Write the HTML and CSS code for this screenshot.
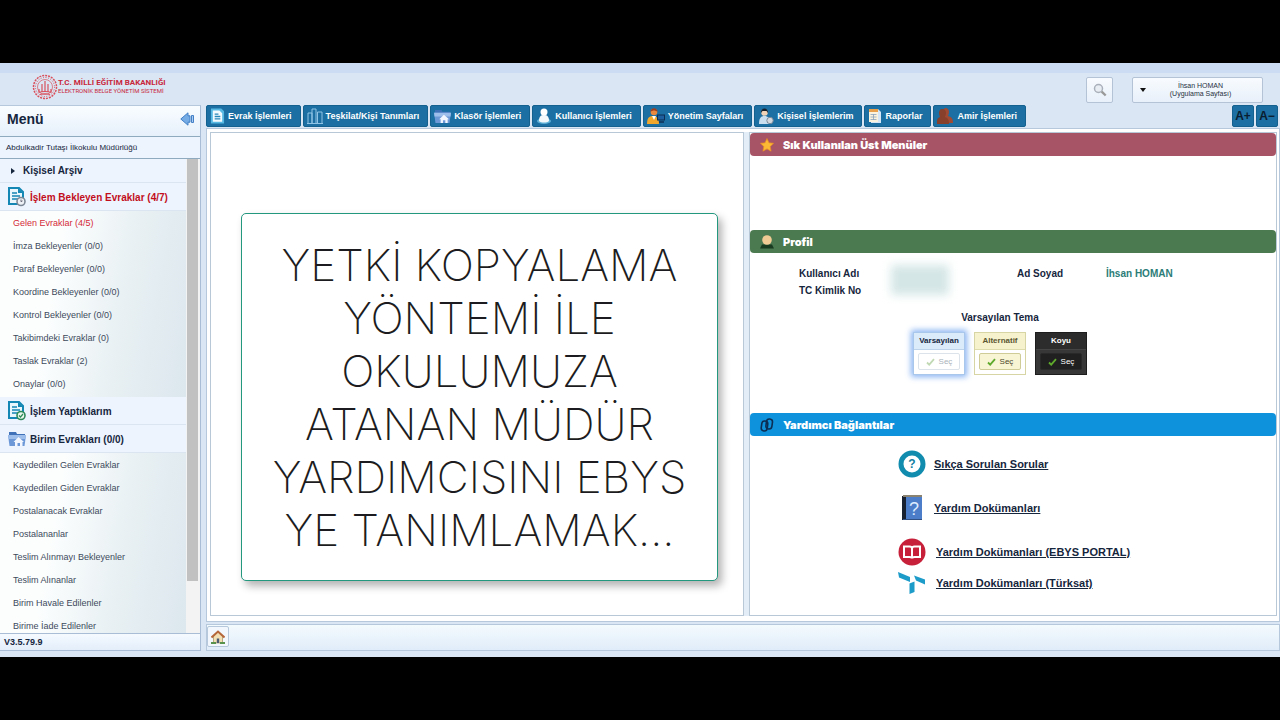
FILE: index.html
```
<!DOCTYPE html>
<html lang="tr">
<head>
    <meta charset="UTF-8">
    <meta name="viewport" content="width=device-width, initial-scale=1.0">
    <title>Elektronik Belge Yönetim Sistemi</title>
    <link rel="stylesheet" href="styles.css">
</head>
<body>
    <!-- shared icons -->
    <svg class="sprite" aria-hidden="true">
        <symbol id="doc" viewBox="0 0 16 18">
            <path d="M1 1h10l4 4v12H1z" fill="#e9f7fc" stroke="#1487b4" stroke-width="2"/>
            <path d="M10 1v5h5" fill="#1487b4"/>
            <path d="M4 6h5M4 9h8M4 12h8" stroke="#1487b4" stroke-width="1.6"/>
        </symbol>
        <symbol id="doc-light" viewBox="0 0 16 16">
            <path d="M1 0h11l3 3v13H1z" fill="#56b9e4"/>
            <path d="M3 2h7l3 3v9H3z" fill="#f4fbff"/>
            <path d="M5 6h4M5 8.500h6M5 11h6" stroke="#2586b8" stroke-width="1.4"/>
        </symbol>
        <symbol id="folder" viewBox="0 0 18 16">
            <path d="M1 1h7l1 2h8v7H1z" fill="#3f71b8"/>
            <path d="M0 4h18l-1.500 11h-15z" fill="#6c98d8"/>
            <path d="M0 4h18l-.5 4H.5z" fill="#9dbdea"/>
            <path d="M10.500 6l5.500 5h-1.500v4h-2.500v-3h-2.500v3H7v-4H5.500z" fill="#f2f7ff"/>
        </symbol>
        <symbol id="check" viewBox="0 0 9 8">
            <path d="M1 4.500l2.200 2.200L8 1.200" fill="none" stroke="currentColor" stroke-width="1.800"/>
        </symbol>
    </svg>

    <div class="app">
        <header class="top">
            <div class="logo">
                <svg class="emblem" viewBox="0 0 26 26" fill="none" stroke="#d9505c">
                    <circle cx="13" cy="13" r="11.500" stroke-width="1.500" stroke-dasharray="2 1"/>
                    <circle cx="13" cy="13" r="9.500" stroke-width="1" stroke-dasharray="1 1.500"/>
                    <circle cx="13" cy="13" r="7.500" stroke-width=".7"/>
                    <path d="M13 7v11M10 10v8M16 10v8M7 15v3M19 15v3" stroke-width="1.200"/>
                    <path d="M6.500 18.500q6.500-2 13 0M8 20.500q5-1.500 10 0" stroke-width="1.200"/>
                </svg>
                <div>
                    <strong>T.C. MİLLİ EĞİTİM BAKANLIĞI</strong>
                    <span>ELEKTRONİK BELGE YÖNETİM SİSTEMİ</span>
                </div>
            </div>
            <div class="tools">
                <button class="search" aria-label="Ara">
                    <svg width="14" height="14" viewBox="0 0 14 14" fill="none"><circle cx="5.500" cy="5.500" r="4" fill="#e8edf4" stroke="#aab0ba" stroke-width="1.500"/><path d="M8.700 8.700l4 3.800" stroke="#999" stroke-width="2.400"/></svg>
                </button>
                <button class="user" aria-haspopup="true">
                    <i class="caret"></i>
                    <span>İhsan HOMAN<br>(Uygulama Sayfası)</span>
                </button>
            </div>
        </header>

        <div class="layout">
            <aside class="sidebar">
                <div class="side-head">
                    <h1>Menü</h1>
                    <button class="collapse" aria-label="Menüyü gizle">
                        <svg width="15" height="14" viewBox="0 0 15 14" fill="#75ace6" stroke="#4380c6"><path d="M.8 7L8 .8v3h2v6.400H8v3z"/><path d="M11.500 3.500h2v7h-2z" fill="#a9cdf2"/></svg>
                    </button>
                </div>
                <p class="school">Abdulkadir Tutaşı İlkokulu Müdürlüğü</p>
                <div class="side-scroll">
                    <nav class="tree">
                        <a class="group small" href="#"><i class="arrow"></i>Kişisel Arşiv</a>
                        <a class="group waiting" href="#">
                            <svg width="18" height="20" viewBox="0 0 18 20"><use href="#doc" width="16" height="18"/><circle cx="13" cy="14.500" r="4" fill="#eef1f5" stroke="#7d8896" stroke-width="1.600"/><path d="M13 12.500v2.200l1.500-.8" fill="none" stroke="#667"/></svg>
                            İşlem Bekleyen Evraklar (4/7)
                        </a>
                        <ul>
                            <li><a class="red" href="#">Gelen Evraklar (4/5)</a></li>
                            <li><a href="#">İmza Bekleyenler (0/0)</a></li>
                            <li><a href="#">Paraf Bekleyenler (0/0)</a></li>
                            <li><a href="#">Koordine Bekleyenler (0/0)</a></li>
                            <li><a href="#">Kontrol Bekleyenler (0/0)</a></li>
                            <li><a href="#">Takibimdeki Evraklar (0)</a></li>
                            <li><a href="#">Taslak Evraklar (2)</a></li>
                            <li><a href="#">Onaylar (0/0)</a></li>
                        </ul>
                        <a class="group" href="#">
                            <svg width="18" height="20" viewBox="0 0 18 20"><use href="#doc" width="16" height="18"/><circle cx="13" cy="14.500" r="4" fill="#e9f7ec" stroke="#2d8a59" stroke-width="1.600"/><path d="M11 14.500l1.500 1.500 2.500-3" fill="none" stroke="#2d8a59" stroke-width="1.200"/></svg>
                            İşlem Yaptıklarım
                        </a>
                        <a class="group" href="#">
                            <svg width="18" height="16"><use href="#folder" width="18" height="16"/></svg>
                            Birim Evrakları (0/0)
                        </a>
                        <ul>
                            <li><a href="#">Kaydedilen Gelen Evraklar</a></li>
                            <li><a href="#">Kaydedilen Giden Evraklar</a></li>
                            <li><a href="#">Postalanacak Evraklar</a></li>
                            <li><a href="#">Postalananlar</a></li>
                            <li><a href="#">Teslim Alınmayı Bekleyenler</a></li>
                            <li><a href="#">Teslim Alınanlar</a></li>
                            <li><a href="#">Birim Havale Edilenler</a></li>
                            <li><a href="#">Birime İade Edilenler</a></li>
                        </ul>
                    </nav>
                    <div class="track"><div class="thumb"></div></div>
                </div>
                <p class="version">V3.5.79.9</p>
            </aside>

            <main class="main">
                <div class="menubar">
                    <button>
                        <svg width="15" height="16"><use href="#doc-light" width="15" height="16"/></svg>
                        Evrak İşlemleri
                    </button>
                    <button>
                        <svg width="16" height="16" viewBox="0 0 16 16" fill="none" stroke="#8fc4e6"><path d="M1 15V5h4v10M5 15V1h4v14M10.500 15V4H15v11M0 15.500h16"/></svg>
                        Teşkilat/Kişi Tanımları
                    </button>
                    <button>
                        <svg width="17" height="15"><use href="#folder" width="17" height="15"/></svg>
                        Klasör İşlemleri
                    </button>
                    <button>
                        <svg width="16" height="16" viewBox="0 0 16 16"><ellipse cx="8" cy="13" rx="7" ry="3" fill="#5db1d8"/><circle cx="8" cy="4" r="3.500" fill="#fff"/><path d="M3 13c0-5 2-6 5-6s5 1 5 6c-2 2-8 2-10 0z" fill="#f3f8fb"/></svg>
                        Kullanıcı İşlemleri
                    </button>
                    <button>
                        <svg width="18" height="16" viewBox="0 0 18 16"><circle cx="7" cy="4" r="3.300" fill="#e9893f"/><path d="M3.500 4c0-5 7-5 7 0-2-2-5-2-7 0z" fill="#9d3d1d"/><path d="M0 16c0-6 2-8 6-8s6 3 6 8z" fill="#f0a72c"/><path d="M5 8l2 4 2-4z" fill="#fff"/><rect x="10.500" y="7" width="7" height="5" fill="#1d5f9f" stroke="#0e2e55"/><path d="M12 14h5" stroke="#0e2e55" stroke-width="1.500"/></svg>
                        Yönetim Sayfaları
                    </button>
                    <button>
                        <svg width="16" height="16" viewBox="0 0 16 16"><circle cx="6.500" cy="4.500" r="3.300" fill="#f1d3b8"/><path d="M3 5c-.5-6 7.500-6 7 0L8.500 3h-4z" fill="#16202c"/><path d="M1 16c0-6 2-8 5.500-8S12 10 12 16z" fill="#c9dff0"/><circle cx="12" cy="12.500" r="3.200" fill="#d3d8de" stroke="#78889a"/></svg>
                        Kişisel İşlemlerim
                    </button>
                    <button>
                        <svg width="14" height="16" viewBox="0 0 14 16"><path d="M3 1h7l3 3v11H3z" fill="#d5e7f6"/><path d="M1 2h9v12H1z" fill="#fbf3de"/><path d="M1 1h9v3H1z" fill="#e9a04a"/><path d="M2.500 6.500h6M2.500 9h6M2.500 11.500h6M5.500 6v6" stroke="#8ba3bd" stroke-width=".8"/></svg>
                        Raporlar
                    </button>
                    <button>
                        <svg width="17" height="16" viewBox="0 0 17 16"><path d="M8 0c3 0 4 2 4 4s-1 3-1 4c4 1 5 3 5 7H6V2z" fill="#a14a33"/><path d="M5 1c3 0 4 2 4 4S8 8 8 9c3 1 4 3 4 7H0c0-4 0-6 3-7 0-1-1-2-1-4s1-4 3-4z" fill="#86402c"/></svg>
                        Amir İşlemleri
                    </button>
                    <div class="zoomers">
                        <button>A+</button>
                        <button>A−</button>
                    </div>
                </div>

                <div class="content">
                    <section class="pane left">
                        <div class="notice">YETKİ KOPYALAMA<br>YÖNTEMİ İLE<br>OKULUMUZA<br>ATANAN MÜDÜR<br>YARDIMCISINI EBYS<br>YE TANIMLAMAK...</div>
                    </section>
                    <section class="pane right">
                        <h2 class="bar rose">
                            <svg width="14" height="14" viewBox="0 0 14 14"><path d="M7 .5l2 4.300 4.600.5-3.400 3.200.9 4.700L7 10.900l-4.100 2.300.9-4.700L.4 5.300 5 4.800z" fill="#fbb934" stroke="#e88a22" stroke-width=".7"/></svg>
                            Sık Kullanılan Üst Menüler
                        </h2>
                        <div class="favorites"></div>

                        <h2 class="bar green">
                            <svg width="14" height="14" viewBox="0 0 14 14"><path d="M0 13.500L2 9.500h10l2 4z" fill="#193b20"/><circle cx="7" cy="5" r="4.800" fill="#f1cb94"/></svg>
                            Profil
                        </h2>
                        <div class="profile">
                            <dl>
                                <dt>Kullanıcı Adı</dt>
                                <dd class="masked"><i></i></dd>
                                <dt>Ad Soyad</dt>
                                <dd>İhsan HOMAN</dd>
                                <dt>TC Kimlik No</dt>
                            </dl>
                            <h3>Varsayılan Tema</h3>
                            <div class="themes">
                                <div class="theme default">
                                    <h4>Varsayılan</h4>
                                    <button disabled><svg width="9" height="8"><use href="#check"/></svg>Seç</button>
                                </div>
                                <div class="theme alt">
                                    <h4>Alternatif</h4>
                                    <button><svg width="9" height="8"><use href="#check"/></svg>Seç</button>
                                </div>
                                <div class="theme dark">
                                    <h4>Koyu</h4>
                                    <button><svg width="9" height="8"><use href="#check"/></svg>Seç</button>
                                </div>
                            </div>
                        </div>

                        <h2 class="bar blue">
                            <svg width="14" height="14" viewBox="0 0 14 14" fill="none" stroke="#0b2e55" stroke-width="1.600"><rect x="1.500" y="3" width="6" height="10" rx="3" transform="rotate(8 4.500 8)"/><rect x="6.200" y="1" width="6" height="10" rx="3" transform="rotate(8 9 6)"/></svg>
                            Yardımcı Bağlantılar
                        </h2>
                        <div class="links">
                            <a href="#">
                                <svg width="28" height="28" viewBox="0 0 28 28"><circle cx="14" cy="14" r="11" fill="#fff" stroke="#118cae" stroke-width="5"/><text x="14" y="18" text-anchor="middle" class="mark">?</text></svg>
                                <span>Sıkça Sorulan Sorular</span>
                            </a>
                            <a href="#">
                                <svg width="28" height="28" viewBox="0 0 28 28"><path d="M4 2h20v24H4z" fill="#4c7dc8"/><path d="M4 2h4v24H4z" fill="#18212f"/><path d="M5 1h19v2H5z" fill="#8b8372"/><path d="M5 25.500h19" stroke="#304f82"/><text x="16" y="21" text-anchor="middle" class="bookmark">?</text></svg>
                                <span>Yardım Dokümanları</span>
                            </a>
                            <a class="wide" href="#">
                                <svg width="28" height="28" viewBox="0 0 28 28"><circle cx="14" cy="14" r="13.500" fill="#c7203a"/><path d="M6 8.500h5.500q2.500 0 2.500 2 0-2 2.500-2H22v10.500h-5.500q-2.500 0-2.500 1.500 0-1.500-2.500-1.500H6zM14 10v10" fill="none" stroke="#fff" stroke-width="2"/></svg>
                                <span>Yardım Dokümanları (EBYS PORTAL)</span>
                            </a>
                            <a class="wide" href="#">
                                <svg width="28" height="24" viewBox="0 0 28 24" fill="#1d9bc9"><path d="M0 1l12 5v5L1 6.500z"/><path d="M11.500 12.500l5-2V21l-5 2z"/><path d="M16 4.500l11 4v5L18 9.500z"/></svg>
                                <span>Yardım Dokümanları (Türksat)</span>
                            </a>
                        </div>
                    </section>
                </div>

                <footer class="taskbar">
                    <button aria-label="Ana sayfa">
                        <svg width="14" height="14" viewBox="0 0 14 14"><path d="M2.500 6v7h9V6L7 2z" fill="#f2dfb4" stroke="#a28b57" stroke-width=".7"/><path d="M.5 7.500L7 1.500l6.500 6" fill="none" stroke="#b5673a" stroke-width="2"/><path d="M5.800 8.500h2.400V13H5.800z" fill="#4a5a72"/><path d="M0 13h5M9 13h5" stroke="#58924d" stroke-width="1.800"/></svg>
                    </button>
                </footer>
            </main>
        </div>
    </div>
</body>
</html>
```

FILE: styles.css
```
* {
    box-sizing: border-box;
}

body {
    display: flex;
    flex-direction: column;
    height: 100vh;
    margin: 0;
    padding: 63px 0;
    background-color: #000;
    color: #16263d;
    font-family: "Liberation Sans", Arial, sans-serif;
    font-size: 10px;
}

h1, h2, h3, h4, p, ul, dl, dd {
    margin: 0;
    padding: 0;
}

a {
    color: inherit;
    text-decoration: none;
}

button {
    padding: 0;
    font-family: inherit;
    cursor: pointer;
}

svg {
    flex: none;
}

.sprite {
    position: absolute;
    width: 0;
    height: 0;
}

.app {
    display: flex;
    flex-direction: column;
    flex: 1;
    min-height: 0;
    padding-bottom: 6px;
    background-color: #dae6f4;
    border-top: 10px solid #cbdcf3;
}

/* header */
.top {
    display: flex;
    justify-content: space-between;
    height: 32px;
    padding: 0 17px 0 32px;
}

.logo {
    display: flex;
    align-items: center;
    height: 27px;
    color: #c8283c;
}

.logo strong, .logo span {
    display: block;
    font-family: Roboto, sans-serif;
    font-size: 8px;
    line-height: 8px;
    white-space: nowrap;
}

.logo span {
    font-size: 6px;
}

.emblem {
    width: 26px;
    height: 26px;
}

.tools {
    display: flex;
    gap: 19px;
    padding-top: 4px;
}

.tools button {
    height: 26px;
    background: linear-gradient(#f8fbfe, #e8f0fa);
    border: 1px solid #b5c3d6;
    border-radius: 2px;
}

.search {
    width: 27px;
}

.search svg {
    display: block;
    margin: auto;
}

.user {
    display: flex;
    align-items: center;
    width: 131px;
    padding: 0 7px;
    color: #27313f;
    font-size: 7px;
    line-height: 8px;
}

.user span {
    flex: 1;
}

.caret {
    border: 3px solid transparent;
    border-top: 4px solid #111;
    border-bottom: 0;
}

/* sidebar */
.layout {
    display: flex;
    flex: 1;
    gap: 5px;
    min-height: 0;
}

.sidebar {
    display: flex;
    flex-direction: column;
    width: 201px;
    background-color: #edf4fd;
    border-top: 1px solid #b5c8dc;
    border-right: 1px solid #a9bdd6;
}

.side-head {
    display: flex;
    align-items: center;
    justify-content: space-between;
    height: 31px;
    padding: 0 5px 5px 7px;
    background: linear-gradient(#f9fdff, #e6f0fb);
    border-bottom: 1px solid #8fa9bf;
}

h1 {
    font-size: 14px;
}

.collapse {
    display: flex;
    background: none;
    border: 0;
}

.school {
    height: 22px;
    padding-left: 6px;
    border-bottom: 1px solid #8fa9bf;
    font-size: 8px;
    line-height: 21px;
}

.side-scroll {
    display: flex;
    flex: 1;
    min-height: 0;
    overflow: hidden;
}

.tree {
    flex: 1;
}

.group {
    display: flex;
    align-items: center;
    gap: 4px;
    height: 28px;
    padding: 1px 0 0 8px;
    background-color: #edf4fe;
    border-bottom: 1px solid #dbe5f1;
    font-size: 10px;
    font-weight: bold;
}

.small {
    height: 24px;
    gap: 8px;
    padding: 0 0 0 11px;
}

.waiting {
    color: #c20e1c;
}

.arrow {
    border: 3px solid transparent;
    border-left: 4px solid #16263d;
    border-right: 0;
}

ul {
    list-style: none;
    padding: 1px 0;
    background: linear-gradient(100deg, #fcfefe 30%, #e8f0f3 65%, #dce7ee);
}

li a {
    display: block;
    padding-left: 13px;
    color: #3d4a5c;
    font-size: 9px;
    line-height: 23px;
}

li .red {
    color: #d42a38;
}

.track {
    width: 14px;
    padding: 0 2px 0 1px;
    background-color: #f3f3f4;
}

.thumb {
    height: 89%;
    background-color: #c1c1c1;
}

.version {
    height: 18px;
    padding-left: 4px;
    background: linear-gradient(#f5faff, #e3eefa);
    border-top: 1px solid #a9bdd6;
    border-bottom: 1px solid #a9bdd6;
    font-size: 9px;
    font-weight: bold;
    line-height: 17px;
}

/* main area */
.main {
    display: flex;
    flex-direction: column;
    flex: 1;
    min-width: 0;
}

.menubar {
    display: flex;
    gap: 2px;
    height: 23px;
    padding-right: 2px;
}

.menubar button {
    display: flex;
    align-items: center;
    gap: 3px;
    height: 22px;
    padding: 0 8px 0 3px;
    background-color: #1b6fa2;
    border: 1px solid #14608f;
    border-radius: 2px;
    color: #fff;
    font-size: 9px;
    font-weight: bold;
    white-space: nowrap;
}

.zoomers {
    display: flex;
    gap: 2px;
    margin-left: auto;
}

.menubar .zoomers button {
    justify-content: center;
    width: 22px;
    padding: 0;
    color: #0a1c30;
    font-size: 12px;
}

.content {
    display: grid;
    grid-template-columns: minmax(0, 535fr) minmax(0, 529fr);
    gap: 5px;
    flex: 1;
    min-height: 0;
    padding: 3px 2px 5px 3px;
    background-color: #fff;
    border: 1px solid #b5c8dc;
}

.pane {
    border: 1px solid #b9c8d6;
    background-color: #fff;
}

.left {
    padding: 80px 25px 0 30px;
}

.right {
    /* fills the splitter gap next to the left pane */
    box-shadow: -5px 0 0 #e3edf7;
}

.notice {
    padding: 25px 0 23px;
    background-color: #fff;
    border: 1px solid #24977f;
    border-radius: 5px;
    box-shadow: 4px 5px 9px rgba(0, 0, 0, 0.3);
    color: #1c1c20;
    font-family: Inter, sans-serif;
    font-size: 44px;
    font-weight: 200;
    line-height: 53px;
    text-align: center;
    white-space: nowrap;
}

.bar {
    display: flex;
    align-items: center;
    gap: 9px;
    height: 23px;
    padding-left: 10px;
    border-radius: 4px;
    color: #fff;
    font-family: Inter, sans-serif;
    font-size: 11px;
    font-weight: 900;
}

.rose {
    background-color: #a85467;
}

.green {
    background-color: #4b7950;
}

.blue {
    background-color: #0f92dc;
}

.favorites {
    height: 74px;
}

/* profile */
.profile {
    height: 160px;
    padding: 12px 75px 0 49px;
}

dl {
    display: grid;
    grid-template-columns: 72px 146px 89px auto;
    line-height: 17px;
}

dt {
    font-weight: bold;
    white-space: nowrap;
}

dd {
    color: #2c7d78;
    font-weight: bold;
}

.masked {
    grid-row: span 2;
    padding-left: 20px;
}

.masked i {
    display: block;
    width: 58px;
    height: 30px;
    background-color: #d5e6e6;
    filter: blur(5px);
}

h3 {
    margin: 10px 0 6px;
    font-size: 10px;
    line-height: 17px;
    text-align: center;
}

.themes {
    display: flex;
    justify-content: center;
    gap: 9px;
}

.theme {
    width: 52px;
    height: 43px;
    border: 1px solid #a9c7ea;
    background-color: #fff;
    text-align: center;
}

.theme h4 {
    height: 17px;
    margin-bottom: 3px;
    background-color: #dcebfa;
    border-bottom: 1px solid #bdd3eb;
    font-size: 8px;
    line-height: 16px;
}

.theme button {
    display: flex;
    align-items: center;
    justify-content: center;
    gap: 4px;
    width: 42px;
    height: 17px;
    margin: 0 auto;
    background-color: #fff;
    border: 1px solid #dce3ea;
    border-radius: 2px;
    color: #aab2ba;
    font-size: 8px;
}

.theme svg {
    color: #5faa2c;
}

.default {
    box-shadow: 0 0 6px 2px #8ab4f2;
}

.default svg {
    color: #c2d9b5;
}

.alt {
    border-color: #d8d5a5;
}

.alt h4 {
    background-color: #f5f2cd;
    border-color: #dedbad;
    color: #5c5631;
}

.alt button {
    background-color: #f7f5d4;
    border-color: #d0cc98;
    color: #4c472a;
}

.dark {
    background-color: #373737;
    border-color: #1d1d1d;
}

.dark h4 {
    background-color: #2c2c2c;
    border-color: #444;
    color: #fff;
}

.dark button {
    background-color: #202020;
    border-color: #292929;
    color: #fff;
}

/* help links */
.links {
    display: flex;
    flex-direction: column;
    padding: 6px 0 0 148px;
}

.links a {
    display: flex;
    align-items: center;
    gap: 8px;
    height: 44px;
    font-size: 11px;
    font-weight: bold;
}

.links span {
    text-decoration: underline;
    white-space: nowrap;
}

.links .wide {
    gap: 10px;
}

.links .wide + .wide {
    height: 18px;
}

.mark {
    fill: #1580a2;
    font-size: 12px;
    font-weight: bold;
}

.bookmark {
    fill: #dcebff;
    font-size: 18px;
    font-weight: normal;
}

/* bottom bar */
.taskbar {
    height: 27px;
    margin-top: 2px;
    padding: 1px 0 0;
    background: linear-gradient(#f4fbfe, #e0ecf9);
    border: 1px solid #b5c8dc;
}

.taskbar button {
    display: flex;
    align-items: center;
    justify-content: center;
    width: 22px;
    height: 21px;
    background-color: #f1f7fd;
    border: 1px solid #b5c8dc;
    border-radius: 2px;
}
```
